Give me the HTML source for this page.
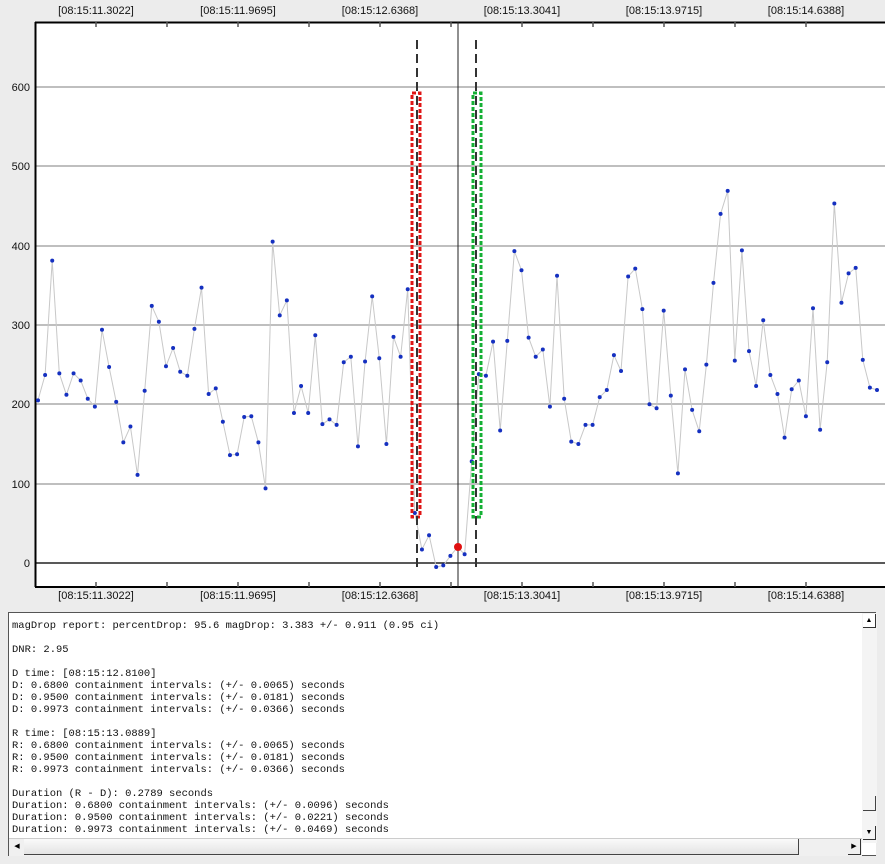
<!DOCTYPE html>
<html><head><meta charset="utf-8"><style>
html,body{margin:0;padding:0;background:#ececec;width:885px;height:864px;overflow:hidden;font-family:"Liberation Sans",sans-serif}
#ta{position:absolute;left:8px;top:612px;width:868px;height:244px;background:#fff;border:1px solid #555;border-right:none;box-sizing:border-box}
pre{margin:0;position:absolute;left:12px;top:620px;font-family:"Liberation Mono",monospace;font-size:10.47px;line-height:12px;color:#111}
</style></head><body>
<svg id="s" width="885" height="610" style="position:absolute;left:0;top:0" font-family="Liberation Sans, sans-serif" font-size="11">
<rect x="35" y="22" width="850" height="565" fill="#fff"/>
<g stroke="#aaa" stroke-width="1.5">
<line x1="35" x2="885" y1="87" y2="87"/><line x1="35" x2="885" y1="166" y2="166"/><line x1="35" x2="885" y1="246" y2="246"/><line x1="35" x2="885" y1="325" y2="325"/><line x1="35" x2="885" y1="404" y2="404"/><line x1="35" x2="885" y1="484" y2="484"/>
</g>
<line x1="35" x2="885" y1="563" y2="563" stroke="#222" stroke-width="1.5"/>
<line x1="35" x2="885" y1="22.5" y2="22.5" stroke="#000" stroke-width="2"/>
<line x1="35" x2="885" y1="587" y2="587" stroke="#000" stroke-width="2"/>
<line x1="35.5" x2="35.5" y1="22" y2="587" stroke="#000" stroke-width="2"/>
<g fill="#111" text-anchor="end" font-size="11"><text x="30" y="91">600</text><text x="30" y="170">500</text><text x="30" y="250">400</text><text x="30" y="329">300</text><text x="30" y="408">200</text><text x="30" y="488">100</text><text x="30" y="567">0</text></g>
<g id="lbl" fill="#111" text-anchor="middle" font-size="11"></g>
<g id="tk" stroke="#555" stroke-width="1.5"></g>
<polyline id="pl" fill="none" stroke="#c8c8c8" stroke-width="1"/>
<g id="pts" fill="#1530c0"></g>
<rect x="412" y="93" width="8" height="424" fill="none" stroke="#e01515" stroke-width="3" stroke-dasharray="4,2"/>
<rect x="473" y="93" width="8" height="424" fill="none" stroke="#15b035" stroke-width="3" stroke-dasharray="4,2"/>
<line x1="417" x2="417" y1="40" y2="569" stroke="#333" stroke-width="2" stroke-dasharray="9,5"/>
<line x1="476" x2="476" y1="40" y2="569" stroke="#333" stroke-width="2" stroke-dasharray="9,5"/>
<line x1="458" x2="458" y1="22" y2="587" stroke="#222" stroke-width="1"/>
<circle cx="458" cy="547" r="4" fill="#e01010"/>
</svg>
<div id="ta"></div>
<pre>magDrop report: percentDrop: 95.6 magDrop: 3.383 +/- 0.911 (0.95 ci)

DNR: 2.95

D time: [08:15:12.8100]
D: 0.6800 containment intervals: (+/- 0.0065) seconds
D: 0.9500 containment intervals: (+/- 0.0181) seconds
D: 0.9973 containment intervals: (+/- 0.0366) seconds

R time: [08:15:13.0889]
R: 0.6800 containment intervals: (+/- 0.0065) seconds
R: 0.9500 containment intervals: (+/- 0.0181) seconds
R: 0.9973 containment intervals: (+/- 0.0366) seconds

Duration (R - D): 0.2789 seconds
Duration: 0.6800 containment intervals: (+/- 0.0096) seconds
Duration: 0.9500 containment intervals: (+/- 0.0221) seconds
Duration: 0.9973 containment intervals: (+/- 0.0469) seconds</pre>
<div style="position:absolute;left:862px;top:613px;width:15px;height:230px;background:#f4f4f4"></div>
<div style="position:absolute;left:863px;top:614px;width:12px;height:13px;background:#fff;border-right:1px solid #333;border-bottom:1px solid #333;font-size:7px;text-align:center;line-height:13px">▲</div>
<div style="position:absolute;left:863px;top:796px;width:12px;height:14px;border-right:1px solid #444;border-bottom:1px solid #444"></div>
<div style="position:absolute;left:863px;top:826px;width:12px;height:13px;border-right:1px solid #333;border-bottom:1px solid #333;font-size:7px;text-align:center;line-height:13px">▼</div>
<div style="position:absolute;left:9px;top:838px;width:853px;height:17px;background:#f0f0f0;border-top:1px solid #ccc"></div>
<div style="position:absolute;left:10px;top:839px;width:14px;height:15px;border-right:1px solid #333;font-size:7px;line-height:15px;text-align:center">◀</div>
<div style="position:absolute;left:24px;top:839px;width:774px;height:15px;background:linear-gradient(#fafafa,#e4e4e4);border-right:1px solid #444;border-bottom:1px solid #444"></div>
<div style="position:absolute;left:848px;top:839px;width:12px;height:15px;border-right:1px solid #333;border-bottom:1px solid #333;font-size:7px;line-height:15px;text-align:center">▶</div>
<script>
var ns="http://www.w3.org/2000/svg";
var v=[205,237,381,239,212,239,230,207,197,294,247,203,152,172,111,217,324,304,248,271,241,236,295,347,213,220,178,136,137,184,185,152,94,405,312,331,189,223,189,287,175,181,174,253,260,147,254,336,258,150,285,260,345,63,17,35,-5,-3,9,20,11,128,238,236,279,167,280,393,369,284,260,269,197,362,207,153,150,174,174,209,218,262,242,361,371,320,200,195,318,211,113,244,193,166,250,353,440,469,255,394,267,223,306,237,213,158,219,230,185,321,168,253,453,328,365,372,256,221,218];
var n=v.length,pts=[],g=document.getElementById('pts');
for(var i=0;i<n;i++){var x=38+i*(877-38)/(n-1),y=563-v[i]*0.7935;pts.push(x.toFixed(1)+','+y.toFixed(1));
if(i!=59){var c=document.createElementNS(ns,'circle');c.setAttribute('cx',x);c.setAttribute('cy',y);c.setAttribute('r',2);g.appendChild(c);}}
document.getElementById('pl').setAttribute('points',pts.join(' '));
var L=['[08:15:11.3022]','[08:15:11.9695]','[08:15:12.6368]','[08:15:13.3041]','[08:15:13.9715]','[08:15:14.6388]'];
var lg=document.getElementById('lbl'),tk=document.getElementById('tk');
for(var j=0;j<6;j++){var cx=96+j*142;
[14,599].forEach(function(yy){var t=document.createElementNS(ns,'text');t.setAttribute('x',cx);t.setAttribute('y',yy);t.textContent=L[j];lg.appendChild(t);});
[cx,cx-71].forEach(function(xx){if(xx<40)return;[[22,27],[582,587]].forEach(function(r){var l=document.createElementNS(ns,'line');l.setAttribute('x1',xx);l.setAttribute('x2',xx);l.setAttribute('y1',r[0]);l.setAttribute('y2',r[1]);tk.appendChild(l);});});}
</script>
</body></html>
